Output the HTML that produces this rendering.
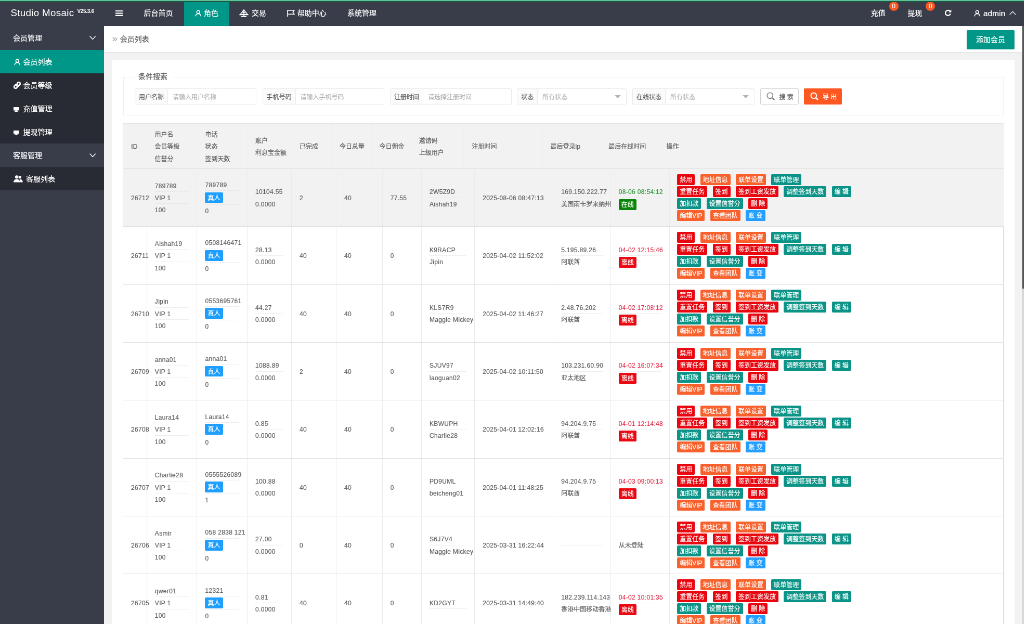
<!DOCTYPE html>
<html lang="zh-CN">
<head>
<meta charset="utf-8">
<title>Studio Mosaic</title>
<style>
*{box-sizing:border-box;margin:0;padding:0}
html,body{width:1024px;height:624px;overflow:hidden;background:#f2f2f2}
body{font-family:"Liberation Sans","Noto Sans CJK SC",sans-serif;font-size:14px;color:#333;line-height:24px;-webkit-text-stroke:.22px currentColor}
a{text-decoration:none;color:inherit}
#w{position:absolute;left:0;top:0;width:1969.23px;height:1200px;transform:scale(.52);transform-origin:0 0;will-change:transform;background:#f2f2f2;overflow:hidden}
/* header */
#hd{position:absolute;left:0;top:0;width:100%;height:50px;background:#393D49;color:#fff}
#bar1,#bar2{position:absolute;left:0;width:1024px;height:1px;z-index:9}
#bar1{top:0;background:#60c09b}
#bar2{top:1px;background:#1b563e}
#logo{-webkit-text-stroke:0;position:absolute;left:20.5px;top:0;height:50px;line-height:49px;font-size:18.8px;letter-spacing:.3px;color:#fff;white-space:nowrap}
#logo sup{font-size:10px;font-weight:bold;position:relative;top:-6px;left:6px;vertical-align:baseline;letter-spacing:-.3px}
.ni{position:absolute;top:0;height:50px;line-height:51px;font-size:14px;color:#fff;white-space:nowrap}
.ni svg{position:absolute}
.act{background:#009688}
.badge{position:absolute;width:18px;height:18px;border-radius:9px;background:#FF5722;color:#fff;font-size:12px;line-height:18px;text-align:center;top:2.7px}
/* side */
#side{position:absolute;left:0;top:50px;width:200px;bottom:0;background:#393D49;color:#fff}
.si{position:relative;height:45px;line-height:47.500px;font-size:14px;color:#fff;white-space:nowrap}
.si.p{padding-left:25px}
.si.c{background:#282B33;padding-left:44.5px}
.si.c.on{background:#009688}
.si svg{position:absolute}
/* main */
#crumb{position:absolute;left:200px;top:50px;right:3px;height:49.5px;background:#fff;box-shadow:0 1px 3px rgba(0,0,0,.08)}
#crumb .t{position:absolute;left:30.8px;top:0;line-height:51.500px;font-size:14px;color:#555}
#crumb .q{position:absolute;left:15.500px;top:0;line-height:47px;font-size:19px;color:#aaa}
#add{position:absolute;left:1859px;top:57.5px;width:92px;height:37.5px;line-height:37.5px;background:#009688;color:#fff;font-size:14px;text-align:center;border-radius:2px}
#sbt{position:absolute;right:0;top:50px;width:3.400px;height:1160px;background:#d6d6d6}
#sb{position:absolute;right:0;top:50px;width:3.600px;height:505px;background:#575757}
#card{position:absolute;left:215px;top:115px;width:1736px;height:1200px;background:#fff;border-radius:2px}
#fs{position:absolute;left:236.5px;top:147.5px;width:1693.5px;height:74.5px;border:1px solid #efefef}
#lg{position:absolute;left:256px;top:134.500px;padding:0 10px;background:#fff;font-size:14px;line-height:24px;color:#555}
.fg{position:absolute;top:169.5px;height:31.5px;border:1px solid #eaeaea;border-radius:2px;background:#fff;font-size:12px;line-height:32.500px;white-space:nowrap;overflow:hidden}
.fg .lb{position:absolute;left:0;top:0;height:100%;background:#fbfbfb;border-right:1px solid #eaeaea;text-align:center;color:#606060}
.fg .ph{position:absolute;top:0;color:#b5b5b5}
.fg .arr{position:absolute;right:10px;top:12.500px;width:0;height:0;border:6.300px solid transparent;border-top-color:#b4b4b4}
.btn{position:absolute;top:169.5px;height:31.5px;line-height:32.500px;font-size:12px;border-radius:2px;white-space:nowrap}
/* table */
.th,.tr{position:absolute;left:236px;width:1694px;display:flex;border-left:1px solid #e0e0e0;border-bottom:1px solid #dedede;font-size:12px;color:#626262}
.th{top:237.200px;height:87.660px;background:#f2f2f2;border-top:1px solid #e6e6e6}
.tr{height:111.350px;background:#fff}
.tr.hov{background:#f2f2f2}
.td{height:100%;border-right:1px solid #ebebeb;padding:0 0 0 15px;display:flex;flex-direction:column;justify-content:center;white-space:nowrap;overflow:visible;flex:none}
.ln{height:22.3px;line-height:25.300px}
.ln.m{height:25.200px;line-height:25.200px}
.th .td{border-right-color:#eeeeee}
.th .ln{height:23.300px;line-height:26.300px}
.tr.hov .td{border-right-color:#ececec}
.td hr{border:0;border-top:1px solid #eee;height:1px;margin:0 15px 0 0}
.tr.hov .td hr{border-top-color:#e9e9e9}
.l{letter-spacing:.33px}
.tag{display:inline-block;height:20.800px;line-height:22.500px;padding:0 5px;border-radius:2px;color:#fff;font-size:12px;vertical-align:top;margin-top:2.200px}
.tag.kb{background:#1E9FFF}
.tag.kg{background:#0a850a}
.tag.kr{background:#eb0a14}
.green{color:#2f9a3c}
.red{color:#e3344d}
.ops{line-height:0;margin-top:1.500px}
.ops>div{height:23px;white-space:nowrap}
.b{display:inline-block;height:21px;line-height:23px;padding:0 5px;margin-right:10.400px;border-radius:2px;color:#fff;font-size:12px;vertical-align:top}
.b.r{background:#e9060f}
.b.o{background:#f8612c}
.b.g{background:#0a9386}
.b.bl{background:#249fff}
.tr .c11{border-right-color:#cfcfcf}
.tb .c0{width:45.8px}
.th .c0{width:45.5px}
.tb .c1{width:96.7px}
.th .c1{width:97.0px}
.tb .c2{width:96.5px}
.th .c2{width:96.5px}
.tb .c3{width:85.0px}
.th .c3{width:85.0px}
.tb .c4{width:86.0px}
.th .c4{width:77.0px}
.tb .c5{width:88.7px}
.th .c5{width:76.6px}
.tb .c6{width:75.3px}
.th .c6{width:76.2px}
.tb .c7{width:102.3px}
.th .c7{width:101.6px}
.tb .c8{width:150.9px}
.th .c8{width:151.2px}
.tb .c9{width:110.6px}
.th .c9{width:111.8px}
.tb .c10{width:113.2px}
.th .c10{width:111.1px}
.tb .c11{width:642.0px}
.th .c11{width:663.5px}

.th .c0,.th .c1,.th .c3,.th .c9{border-right-color:transparent}
.tr .c11{padding-left:14.200px}
</style>
</head>
<body>
<div id="w">
<!-- header -->
<div id="hd">
  <div id="logo">Studio Mosaic<sup>V25.3.6</sup></div>
  <div class="ni" style="left:202px;width:54px"><svg style="left:20px;top:19.500px" width="14" height="11" viewBox="0 0 14 11"><path d="M0 1h14M0 5.500h14M0 10h14" stroke="#fff" stroke-width="1.800" fill="none"/><path d="M0 3.200h14M0 7.700h14" stroke="#fff" stroke-width=".8" opacity=".35"/></svg></div>
  <div class="ni" style="left:256px;width:98px;padding-left:20.4px">后台首页</div>
  <div class="ni act" style="left:354px;width:86.5px;padding-left:38px"><svg style="left:21px;top:19px" width="12.500" height="13" viewBox="0 0 14 14" fill="none" stroke="#fff" stroke-width="1.700"><circle cx="7" cy="4.2" r="3.2"/><path d="M1.2 13.6c.3-3.6 2.6-5.6 5.8-5.6s5.5 2 5.800 5.600"/></svg>角色</div>
  <div class="ni" style="left:440.500px;width:92px;padding-left:43.500px"><svg style="left:19px;top:17.500px" width="18" height="15" viewBox="0 0 18 15" fill="none" stroke="#fff" stroke-width="1.500"><path d="M9 .8L2.200 9.600h13.600z"/><path d="M9 1v12" stroke-width="1.800"/><path d="M6.300 6.200h5.400" /><path d="M.3 10.300h17.400M4 13.800h10" stroke-width="1.700"/></svg>交易</div>
  <div class="ni" style="left:532.500px;width:116px;padding-left:39.300px"><svg style="left:19.500px;top:18.500px" width="15" height="13" viewBox="0 0 15 13" fill="none" stroke="#fff" stroke-width="1.600"><path d="M1 0v13"/><path d="M1 1h12.800l-2.600 3.600 2.600 3.600H1"/></svg>帮助中心</div>
  <div class="ni" style="left:648.500px;width:96px;padding-left:19.500px">系统管理</div>

  <div class="ni" style="left:1655px;width:70px;padding-left:19.800px">充值<span class="badge" style="left:54.500px">0</span></div>
  <div class="ni" style="left:1725px;width:70px;padding-left:20.600px">提现<span class="badge" style="left:55.400px">0</span></div>
  <div class="ni" style="left:1795px;width:56px"><svg style="left:21px;top:17.500px" width="14" height="14" viewBox="0 0 14 14" fill="none" stroke="#fff" stroke-width="2.300"><path d="M11.800 8.300A5 5 0 1 1 10.700 3.400"/><path d="M13.400 0.400v5.400H8z" fill="#fff" stroke="none"/></svg></div>
  <div class="ni" style="left:1851px;width:118px;padding-left:40px;font-size:15.400px;letter-spacing:.1px"><svg style="left:22px;top:19px" width="12.500" height="13" viewBox="0 0 14 14" fill="none" stroke="#fff" stroke-width="1.700"><circle cx="7" cy="4.200" r="3.200"/><path d="M1.200 13.600c.3-3.600 2.600-5.600 5.800-5.600s5.500 2 5.800 5.600"/></svg>admin<svg style="left:89.500px;top:20.500px" width="13" height="8" viewBox="0 0 13 8" fill="none" stroke="#fff" stroke-width="1.300"><path d="M.6 7.400L6.500 1.200 12.400 7.400"/></svg></div>
</div>


<!-- side -->
<div id="side">
  <div class="si p" style="height:46px">会员管理<svg style="left:172px;top:19px" width="12.400" height="7.500" viewBox="0 0 13 8" fill="none" stroke="#fff" stroke-width="1.500"><path d="M.6.600L6.500 6.800 12.400.600"/></svg></div>
  <div class="si c on"><svg style="left:26.500px;top:16.500px" width="12.500" height="13" viewBox="0 0 14 14" fill="none" stroke="#fff" stroke-width="1.700"><circle cx="7" cy="4.200" r="3.200"/><path d="M1.200 13.600c.3-3.600 2.600-5.600 5.800-5.600s5.500 2 5.800 5.600"/></svg>会员列表</div>
  <div class="si c"><svg style="left:25.500px;top:15.500px" width="14" height="14" viewBox="0 0 14 14" fill="none" stroke="#fff" stroke-width="2.600" stroke-linecap="round"><path d="M6 8a2.800 2.800 0 0 0 4 0l2-2a2.800 2.800 0 0 0-4-4l-.8.800"/><path d="M8 6a2.800 2.800 0 0 0-4 0l-2 2a2.800 2.800 0 0 0 4 4l.8-.8"/></svg>会员等级</div>
  <div class="si c"><svg style="left:26px;top:20px" width="10.500" height="9" viewBox="0 0 13 11"><path d="M1 0h11a1 1 0 0 1 1 1v6a1 1 0 0 1-1 1H8.500v1.300h1.800V11H2.700V9.300h1.800V8H1a1 1 0 0 1-1-1V1a1 1 0 0 1 1-1z" fill="#fff"/></svg>充值管理</div>
  <div class="si c"><svg style="left:26px;top:20px" width="10.500" height="9" viewBox="0 0 13 11"><path d="M1 0h11a1 1 0 0 1 1 1v6a1 1 0 0 1-1 1H8.500v1.300h1.800V11H2.700V9.300h1.800V8H1a1 1 0 0 1-1-1V1a1 1 0 0 1 1-1z" fill="#fff"/></svg>提现管理</div>
  <div class="si p">客服管理<svg style="left:172px;top:19px" width="12.400" height="7.500" viewBox="0 0 13 8" fill="none" stroke="#fff" stroke-width="1.500"><path d="M.6.600L6.500 6.800 12.400.600"/></svg></div>
  <div class="si c" style="padding-left:50px"><svg style="left:25.500px;top:15.500px" width="18" height="14" viewBox="0 0 19 15" preserveAspectRatio="none" fill="#fff"><circle cx="6.500" cy="3.600" r="3.400"/><path d="M0 14.500c0-4 2.500-6.500 6.500-6.500s6.500 2.500 6.500 6.500z"/><circle cx="13" cy="4" r="2.900"/><path d="M12 8c3.800-.5 6.800 2 6.800 6.500h-5c0-2.600-.5-4.800-1.800-6.500z"/></svg>客服列表</div>
</div>

<!-- main -->
<div id="crumb"><span class="q">»</span><span class="t">会员列表</span></div>
<a id="add">添加会员</a>
<div id="card"></div>
<div id="fs"></div>
<div id="lg">条件搜索</div>

<div class="fg" style="left:259px;width:234px"><span class="lb" style="width:63px">用户名称</span><span class="ph" style="left:72px">请输入用户名称</span></div>
<div class="fg" style="left:504.500px;width:234px"><span class="lb" style="width:63px">手机号码</span><span class="ph" style="left:72px">请输入手机号码</span></div>
<div class="fg" style="left:750px;width:234px"><span class="lb" style="width:63px">注册时间</span><span class="ph" style="left:72px">请选择注册时间</span></div>
<div class="fg" style="left:994.300px;width:211px"><span class="lb" style="width:39px">状态</span><span class="ph" style="left:48px">所有状态</span><i class="arr"></i></div>
<div class="fg" style="left:1216px;width:235px"><span class="lb" style="width:63px">在线状态</span><span class="ph" style="left:72px">所有状态</span><i class="arr"></i></div>
<a class="btn" style="left:1461.500px;width:74px;border:1px solid #d2d2d2;background:#fff;color:#555;padding-left:36px"><svg style="position:absolute;left:11px;top:6.500px" width="16" height="16" viewBox="0 0 16 16" fill="none" stroke="#777" stroke-width="1.500"><circle cx="6.800" cy="6.800" r="5.600"/><path d="M11 11l4.200 4.200" stroke-width="2.200"/></svg>搜 索</a>
<a class="btn" style="left:1546px;width:73px;background:#FF5722;color:#fff;padding-left:36px;line-height:34px"><svg style="position:absolute;left:12px;top:7.500px" width="16" height="16" viewBox="0 0 16 16" fill="none" stroke="#fff" stroke-width="2"><circle cx="6.800" cy="6.800" r="5.400"/><path d="M11 11l4 4" stroke-width="2.800"/></svg>导 出</a>

<!-- table -->
<div class="th">
<div class="td c0"><div class="ln"><span class="l">ID</span></div></div>
<div class="td c1"><div class="ln">用户名</div><div class="ln">会员等级</div><div class="ln">信誉分</div></div>
<div class="td c2"><div class="ln">电话</div><div class="ln">状态</div><div class="ln">签到天数</div></div>
<div class="td c3"><div class="ln">账户</div><div class="ln">利息宝金额</div></div>
<div class="td c4"><div class="ln">已完成</div></div>
<div class="td c5"><div class="ln">今日总量</div></div>
<div class="td c6"><div class="ln">今日佣金</div></div>
<div class="td c7"><div class="ln">邀请码</div><div class="ln">上级用户</div></div>
<div class="td c8"><div class="ln">注册时间</div></div>
<div class="td c9"><div class="ln">最后登录ip</div></div>
<div class="td c10"><div class="ln">最后在线时间</div></div>
<div class="td c11"><div class="ln">操作</div></div>
</div>
<div class="tb">
<div class="tr hov" style="top:324.86px">
<div class="td c0"><div class="ln"><span class="l">26712</span></div></div>
<div class="td c1"><div class="ln"><span class="l">789789</span></div><hr><div class="ln"><span class="l">VIP 1</span></div><hr><div class="ln"><span class="l">100</span></div></div>
<div class="td c2"><div class="ln"><span class="l">789789</span></div><hr><div class="ln m"><span class="tag kb">真人</span></div><hr><div class="ln"><span class="l">0</span></div></div>
<div class="td c3"><div class="ln"><span class="l">10104.55</span></div><hr><div class="ln"><span class="l">0.0000</span></div></div>
<div class="td c4"><div class="ln"><span class="l">2</span></div></div>
<div class="td c5"><div class="ln"><span class="l">40</span></div></div>
<div class="td c6"><div class="ln"><span class="l">77.55</span></div></div>
<div class="td c7"><div class="ln"><span class="l">2W5Z9D</span></div><hr><div class=ln><span class="l">Aishah19</span></div></div>
<div class="td c8"><div class="ln"><span class="l">2025-08-06 08:47:13</span></div></div>
<div class="td c9"><div class="ln"><span class="l">169.150.222.77</span></div><hr><div class="ln">美国南卡罗来纳州</div></div>
<div class="td c10"><div class="ln green"><span class="l">08-06 08:54:12</span></div><hr><div class="ln"><span class="tag kg">在线</span></div></div>
<div class="td c11"><div class="ops"><div><a class="b r">禁用</a><a class="b o">地址信息</a><a class="b o">联单设置</a><a class="b g">联单管理</a></div><div><a class="b r">重置任务</a><a class="b r">签到</a><a class="b r">签到工资发放</a><a class="b g">调整签到天数</a><a class="b g">编 辑</a></div><div><a class="b g">加扣款</a><a class="b g">设置信誉分</a><a class="b r">删 除</a></div><div><a class="b o">编辑VIP</a><a class="b o">查看团队</a><a class="b bl">账 变</a></div></div></div>
</div>
<div class="tr" style="top:436.21000000000004px">
<div class="td c0"><div class="ln"><span class="l">26711</span></div></div>
<div class="td c1"><div class="ln"><span class="l">Aishah19</span></div><hr><div class="ln"><span class="l">VIP 1</span></div><hr><div class="ln"><span class="l">100</span></div></div>
<div class="td c2"><div class="ln"><span class="l">0508146471</span></div><hr><div class="ln m"><span class="tag kb">真人</span></div><hr><div class="ln"><span class="l">0</span></div></div>
<div class="td c3"><div class="ln"><span class="l">28.13</span></div><hr><div class="ln"><span class="l">0.0000</span></div></div>
<div class="td c4"><div class="ln"><span class="l">40</span></div></div>
<div class="td c5"><div class="ln"><span class="l">40</span></div></div>
<div class="td c6"><div class="ln"><span class="l">0</span></div></div>
<div class="td c7"><div class="ln"><span class="l">K9RACP</span></div><hr><div class=ln><span class="l">Jipin</span></div></div>
<div class="td c8"><div class="ln"><span class="l">2025-04-02 11:52:02</span></div></div>
<div class="td c9"><div class="ln"><span class="l">5.195.89.26</span></div><hr><div class="ln">阿联酋</div></div>
<div class="td c10"><div class="ln red"><span class="l">04-02 12:15:46</span></div><hr><div class="ln"><span class="tag kr">离线</span></div></div>
<div class="td c11"><div class="ops"><div><a class="b r">禁用</a><a class="b o">地址信息</a><a class="b o">联单设置</a><a class="b g">联单管理</a></div><div><a class="b r">重置任务</a><a class="b r">签到</a><a class="b r">签到工资发放</a><a class="b g">调整签到天数</a><a class="b g">编 辑</a></div><div><a class="b g">加扣款</a><a class="b g">设置信誉分</a><a class="b r">删 除</a></div><div><a class="b o">编辑VIP</a><a class="b o">查看团队</a><a class="b bl">账 变</a></div></div></div>
</div>
<div class="tr" style="top:547.56px">
<div class="td c0"><div class="ln"><span class="l">26710</span></div></div>
<div class="td c1"><div class="ln"><span class="l">Jipin</span></div><hr><div class="ln"><span class="l">VIP 1</span></div><hr><div class="ln"><span class="l">100</span></div></div>
<div class="td c2"><div class="ln"><span class="l">0553695761</span></div><hr><div class="ln m"><span class="tag kb">真人</span></div><hr><div class="ln"><span class="l">0</span></div></div>
<div class="td c3"><div class="ln"><span class="l">44.27</span></div><hr><div class="ln"><span class="l">0.0000</span></div></div>
<div class="td c4"><div class="ln"><span class="l">40</span></div></div>
<div class="td c5"><div class="ln"><span class="l">40</span></div></div>
<div class="td c6"><div class="ln"><span class="l">0</span></div></div>
<div class="td c7"><div class="ln"><span class="l">KLS7R9</span></div><hr><div class=ln><span class="l">Maggie Mickey</span></div></div>
<div class="td c8"><div class="ln"><span class="l">2025-04-02 11:46:27</span></div></div>
<div class="td c9"><div class="ln"><span class="l">2.48.76.202</span></div><hr><div class="ln">阿联酋</div></div>
<div class="td c10"><div class="ln red"><span class="l">04-02 17:08:12</span></div><hr><div class="ln"><span class="tag kr">离线</span></div></div>
<div class="td c11"><div class="ops"><div><a class="b r">禁用</a><a class="b o">地址信息</a><a class="b o">联单设置</a><a class="b g">联单管理</a></div><div><a class="b r">重置任务</a><a class="b r">签到</a><a class="b r">签到工资发放</a><a class="b g">调整签到天数</a><a class="b g">编 辑</a></div><div><a class="b g">加扣款</a><a class="b g">设置信誉分</a><a class="b r">删 除</a></div><div><a class="b o">编辑VIP</a><a class="b o">查看团队</a><a class="b bl">账 变</a></div></div></div>
</div>
<div class="tr" style="top:658.91px">
<div class="td c0"><div class="ln"><span class="l">26709</span></div></div>
<div class="td c1"><div class="ln"><span class="l">anna01</span></div><hr><div class="ln"><span class="l">VIP 1</span></div><hr><div class="ln"><span class="l">100</span></div></div>
<div class="td c2"><div class="ln"><span class="l">anna01</span></div><hr><div class="ln m"><span class="tag kb">真人</span></div><hr><div class="ln"><span class="l">0</span></div></div>
<div class="td c3"><div class="ln"><span class="l">1088.89</span></div><hr><div class="ln"><span class="l">0.0000</span></div></div>
<div class="td c4"><div class="ln"><span class="l">2</span></div></div>
<div class="td c5"><div class="ln"><span class="l">40</span></div></div>
<div class="td c6"><div class="ln"><span class="l">0</span></div></div>
<div class="td c7"><div class="ln"><span class="l">SJUV97</span></div><hr><div class=ln><span class="l">laoguan02</span></div></div>
<div class="td c8"><div class="ln"><span class="l">2025-04-02 10:11:50</span></div></div>
<div class="td c9"><div class="ln"><span class="l">103.231.60.90</span></div><hr><div class="ln">亚太地区</div></div>
<div class="td c10"><div class="ln red"><span class="l">04-02 16:07:34</span></div><hr><div class="ln"><span class="tag kr">离线</span></div></div>
<div class="td c11"><div class="ops"><div><a class="b r">禁用</a><a class="b o">地址信息</a><a class="b o">联单设置</a><a class="b g">联单管理</a></div><div><a class="b r">重置任务</a><a class="b r">签到</a><a class="b r">签到工资发放</a><a class="b g">调整签到天数</a><a class="b g">编 辑</a></div><div><a class="b g">加扣款</a><a class="b g">设置信誉分</a><a class="b r">删 除</a></div><div><a class="b o">编辑VIP</a><a class="b o">查看团队</a><a class="b bl">账 变</a></div></div></div>
</div>
<div class="tr" style="top:770.26px">
<div class="td c0"><div class="ln"><span class="l">26708</span></div></div>
<div class="td c1"><div class="ln"><span class="l">Laura14</span></div><hr><div class="ln"><span class="l">VIP 1</span></div><hr><div class="ln"><span class="l">100</span></div></div>
<div class="td c2"><div class="ln"><span class="l">Laura14</span></div><hr><div class="ln m"><span class="tag kb">真人</span></div><hr><div class="ln"><span class="l">0</span></div></div>
<div class="td c3"><div class="ln"><span class="l">0.85</span></div><hr><div class="ln"><span class="l">0.0000</span></div></div>
<div class="td c4"><div class="ln"><span class="l">40</span></div></div>
<div class="td c5"><div class="ln"><span class="l">40</span></div></div>
<div class="td c6"><div class="ln"><span class="l">0</span></div></div>
<div class="td c7"><div class="ln"><span class="l">KBWUPH</span></div><hr><div class=ln><span class="l">Charlie28</span></div></div>
<div class="td c8"><div class="ln"><span class="l">2025-04-01 12:02:16</span></div></div>
<div class="td c9"><div class="ln"><span class="l">94.204.9.75</span></div><hr><div class="ln">阿联酋</div></div>
<div class="td c10"><div class="ln red"><span class="l">04-01 12:14:48</span></div><hr><div class="ln"><span class="tag kr">离线</span></div></div>
<div class="td c11"><div class="ops"><div><a class="b r">禁用</a><a class="b o">地址信息</a><a class="b o">联单设置</a><a class="b g">联单管理</a></div><div><a class="b r">重置任务</a><a class="b r">签到</a><a class="b r">签到工资发放</a><a class="b g">调整签到天数</a><a class="b g">编 辑</a></div><div><a class="b g">加扣款</a><a class="b g">设置信誉分</a><a class="b r">删 除</a></div><div><a class="b o">编辑VIP</a><a class="b o">查看团队</a><a class="b bl">账 变</a></div></div></div>
</div>
<div class="tr" style="top:881.61px">
<div class="td c0"><div class="ln"><span class="l">26707</span></div></div>
<div class="td c1"><div class="ln"><span class="l">Charlie28</span></div><hr><div class="ln"><span class="l">VIP 1</span></div><hr><div class="ln"><span class="l">100</span></div></div>
<div class="td c2"><div class="ln"><span class="l">0555526089</span></div><hr><div class="ln m"><span class="tag kb">真人</span></div><hr><div class="ln"><span class="l">1</span></div></div>
<div class="td c3"><div class="ln"><span class="l">100.88</span></div><hr><div class="ln"><span class="l">0.0000</span></div></div>
<div class="td c4"><div class="ln"><span class="l">40</span></div></div>
<div class="td c5"><div class="ln"><span class="l">40</span></div></div>
<div class="td c6"><div class="ln"><span class="l">0</span></div></div>
<div class="td c7"><div class="ln"><span class="l">PD9UML</span></div><hr><div class=ln><span class="l">beicheng01</span></div></div>
<div class="td c8"><div class="ln"><span class="l">2025-04-01 11:48:25</span></div></div>
<div class="td c9"><div class="ln"><span class="l">94.204.9.75</span></div><hr><div class="ln">阿联酋</div></div>
<div class="td c10"><div class="ln red"><span class="l">04-03 09:00:13</span></div><hr><div class="ln"><span class="tag kr">离线</span></div></div>
<div class="td c11"><div class="ops"><div><a class="b r">禁用</a><a class="b o">地址信息</a><a class="b o">联单设置</a><a class="b g">联单管理</a></div><div><a class="b r">重置任务</a><a class="b r">签到</a><a class="b r">签到工资发放</a><a class="b g">调整签到天数</a><a class="b g">编 辑</a></div><div><a class="b g">加扣款</a><a class="b g">设置信誉分</a><a class="b r">删 除</a></div><div><a class="b o">编辑VIP</a><a class="b o">查看团队</a><a class="b bl">账 变</a></div></div></div>
</div>
<div class="tr" style="top:992.9599999999999px">
<div class="td c0"><div class="ln"><span class="l">26706</span></div></div>
<div class="td c1"><div class="ln"><span class="l">Asmir</span></div><hr><div class="ln"><span class="l">VIP 1</span></div><hr><div class="ln"><span class="l">100</span></div></div>
<div class="td c2"><div class="ln"><span class="l">058 2838 121</span></div><hr><div class="ln m"><span class="tag kb">真人</span></div><hr><div class="ln"><span class="l">0</span></div></div>
<div class="td c3"><div class="ln"><span class="l">27.00</span></div><hr><div class="ln"><span class="l">0.0000</span></div></div>
<div class="td c4"><div class="ln"><span class="l">0</span></div></div>
<div class="td c5"><div class="ln"><span class="l">40</span></div></div>
<div class="td c6"><div class="ln"><span class="l">0</span></div></div>
<div class="td c7"><div class="ln"><span class="l">S6J7V4</span></div><hr><div class=ln><span class="l">Maggie Mickey</span></div></div>
<div class="td c8"><div class="ln"><span class="l">2025-03-31 16:22:44</span></div></div>
<div class="td c9"><div class="ln">&nbsp;</div><hr><div class="ln">&nbsp;</div></div>
<div class="td c10"><div class="ln">从未登陆</div></div>
<div class="td c11"><div class="ops"><div><a class="b r">禁用</a><a class="b o">地址信息</a><a class="b o">联单设置</a><a class="b g">联单管理</a></div><div><a class="b r">重置任务</a><a class="b r">签到</a><a class="b r">签到工资发放</a><a class="b g">调整签到天数</a><a class="b g">编 辑</a></div><div><a class="b g">加扣款</a><a class="b g">设置信誉分</a><a class="b r">删 除</a></div><div><a class="b o">编辑VIP</a><a class="b o">查看团队</a><a class="b bl">账 变</a></div></div></div>
</div>
<div class="tr" style="top:1104.31px">
<div class="td c0"><div class="ln"><span class="l">26705</span></div></div>
<div class="td c1"><div class="ln"><span class="l">qwer01</span></div><hr><div class="ln"><span class="l">VIP 1</span></div><hr><div class="ln"><span class="l">100</span></div></div>
<div class="td c2"><div class="ln"><span class="l">12321</span></div><hr><div class="ln m"><span class="tag kb">真人</span></div><hr><div class="ln"><span class="l">0</span></div></div>
<div class="td c3"><div class="ln"><span class="l">0.81</span></div><hr><div class="ln"><span class="l">0.0000</span></div></div>
<div class="td c4"><div class="ln"><span class="l">40</span></div></div>
<div class="td c5"><div class="ln"><span class="l">40</span></div></div>
<div class="td c6"><div class="ln"><span class="l">0</span></div></div>
<div class="td c7"><div class="ln"><span class="l">KD2GYT</span></div><hr></div>
<div class="td c8"><div class="ln"><span class="l">2025-03-31 14:49:40</span></div></div>
<div class="td c9"><div class="ln"><span class="l">182.239.114.143</span></div><hr><div class="ln">香港中国移动香港</div></div>
<div class="td c10"><div class="ln red"><span class="l">04-02 10:01:35</span></div><hr><div class="ln"><span class="tag kr">离线</span></div></div>
<div class="td c11"><div class="ops"><div><a class="b r">禁用</a><a class="b o">地址信息</a><a class="b o">联单设置</a><a class="b g">联单管理</a></div><div><a class="b r">重置任务</a><a class="b r">签到</a><a class="b r">签到工资发放</a><a class="b g">调整签到天数</a><a class="b g">编 辑</a></div><div><a class="b g">加扣款</a><a class="b g">设置信誉分</a><a class="b r">删 除</a></div><div><a class="b o">编辑VIP</a><a class="b o">查看团队</a><a class="b bl">账 变</a></div></div></div>
</div>
</div>
<div id="sbt"></div><div id="sb"></div>
</div>
<div id="bar1"></div><div id="bar2"></div>
</body>
</html>
